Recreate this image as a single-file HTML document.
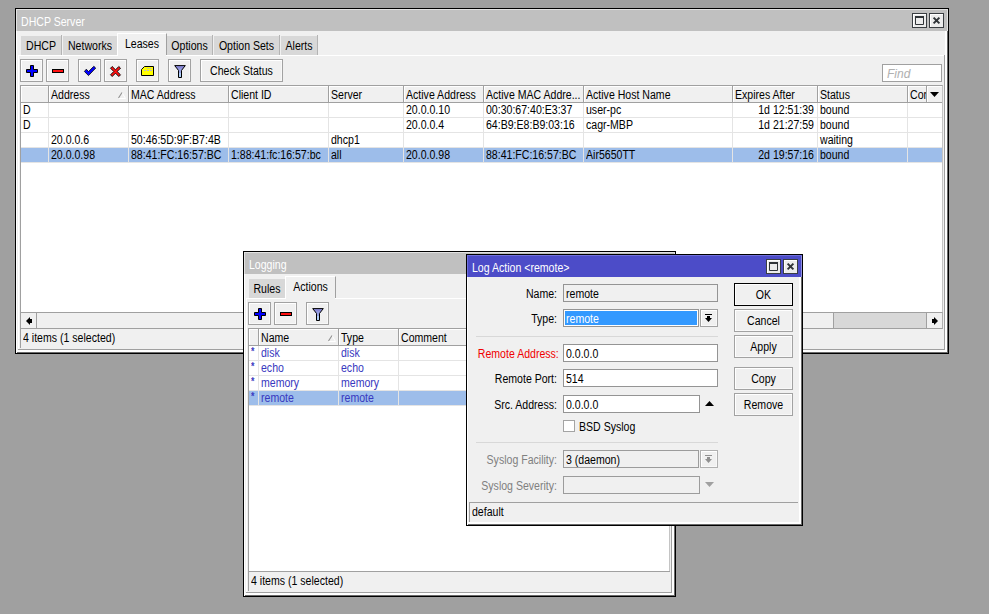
<!DOCTYPE html>
<html><head><meta charset="utf-8"><title>WinBox</title>
<style>
*{box-sizing:border-box;margin:0;padding:0}
html,body{width:989px;height:614px;overflow:hidden;background:#a0a0a0}
body{position:relative;font-family:"Liberation Sans",sans-serif;font-size:12px;color:#000;line-height:15px}
div,span{position:absolute;white-space:nowrap}
.x{transform:scaleX(0.88)}
.win{background:#f0f0f0;border:1px solid #000;box-shadow:inset 1px 1px 0 #fff,inset -1px -1px 0 #6a6a6a,inset -3px -3px 0 #fff}
.tb{height:22px;background:#c0c0c0;box-shadow:inset 1px 1px 0 #e2e2e2,inset -1px 0 0 #e2e2e2}
.tb.act{background:#4c4cc8;box-shadow:inset 1px 1px 0 #7070dc,inset -1px 0 0 #9090e0}
.wb{width:15px;height:15px;background:#ececec;border:1px solid #3a3e42;box-shadow:inset 1px 1px 0 #fff}
.tab{background:#d8d8d8;height:19px}
.tab.on{background:#f0f0f0;border-left:1px solid #fff;border-top:1px solid #fff;border-right:1px solid #a0a0a0}
.btn{background:#f0f0f0;border:1px solid #a2a2a2;box-shadow:inset 1px 1px 0 #fff,inset -1px -1px 0 #f8f8f8}
.tbl{background:#fff;overflow:hidden}
.hd{top:0;height:17px;background:#f0f0f0;border-right:1px solid #a0a0a0;border-bottom:1px solid #a0a0a0;box-shadow:inset 1px 1px 0 #fff;overflow:hidden}
.hd span{left:2px;top:1px;line-height:17px;transform:scaleX(0.88);transform-origin:0 50%}
.vl{width:1px;background:#e4e4e4}
.hl{height:1px;background:#e4e4e4}
.sel{background:#9dbdea}
.in{background:#fff;border:1px solid #949494;height:18px}
svg{position:absolute;overflow:visible}
</style></head><body>
<div class="win" style="left:15px;top:8px;width:934px;height:346px"></div>
<div class="tb" style="left:16px;top:9px;width:932px"></div>
<div class="x" style="top:15px;line-height:15px;height:15px;left:21px;transform-origin:0 50%;color:#fff;">DHCP Server</div>
<div class="wb" style="left:912px;top:13px"></div>
<svg style="left:915px;top:16px" width="9" height="9" viewBox="0 0 9 9"><path d="M0.5 1 H8.5 V8.5 H0.5z" fill="none" stroke="#303438" stroke-width="1"/><rect x="0" y="0" width="9" height="2" fill="#303438"/></svg>
<div class="wb" style="left:929px;top:13px"></div>
<svg style="left:933px;top:17px" width="7" height="7" viewBox="0 0 7 7"><path d="M0.6 0.6 L6.4 6.4 M6.4 0.6 L0.6 6.4" stroke="#303438" stroke-width="2"/></svg>
<div style="left:18px;top:55px;width:926px;height:1px;background:#fff"></div>
<div style="left:18px;top:55px;width:1px;height:294px;background:#fff"></div>
<div style="left:944px;top:55px;width:1px;height:295px;background:#a0a0a0"></div>
<div style="left:18px;top:349px;width:927px;height:1px;background:#a0a0a0"></div>
<div class="tab" style="left:21px;top:36px;width:40px"></div>
<div style="left:61px;top:35px;width:1px;height:20px;background:#b4b4b4"></div>
<div class="x" style="top:39px;line-height:15px;height:15px;left:21px;width:40px;text-align:center;transform-origin:50% 50%;">DHCP</div>
<div class="tab" style="left:63px;top:36px;width:54px"></div>
<div class="x" style="top:39px;line-height:15px;height:15px;left:63px;width:54px;text-align:center;transform-origin:50% 50%;">Networks</div>
<div class="tab on" style="left:117px;top:33px;width:50px;height:22px"></div>
<div style="left:118px;top:55px;width:48px;height:1px;background:#f0f0f0"></div>
<div class="x" style="top:37px;line-height:15px;height:15px;left:117px;width:50px;text-align:center;transform-origin:50% 50%;">Leases</div>
<div class="tab" style="left:167px;top:36px;width:45px"></div>
<div style="left:212px;top:35px;width:1px;height:20px;background:#b4b4b4"></div>
<div class="x" style="top:39px;line-height:15px;height:15px;left:167px;width:45px;text-align:center;transform-origin:50% 50%;">Options</div>
<div class="tab" style="left:214px;top:36px;width:65px"></div>
<div style="left:279px;top:35px;width:1px;height:20px;background:#b4b4b4"></div>
<div class="x" style="top:39px;line-height:15px;height:15px;left:214px;width:65px;text-align:center;transform-origin:50% 50%;">Option Sets</div>
<div class="tab" style="left:281px;top:36px;width:36px"></div>
<div style="left:317px;top:35px;width:1px;height:20px;background:#b4b4b4"></div>
<div class="x" style="top:39px;line-height:15px;height:15px;left:281px;width:36px;text-align:center;transform-origin:50% 50%;">Alerts</div>
<div class="btn" style="left:20px;top:59px;width:23px;height:23px"></div>
<svg style="left:26px;top:65px" width="12" height="12" viewBox="0 0 12 12"><path d="M4.5 0.5h3v4h4v3h-4v4h-3v-4h-4v-3h4z" fill="#0000ff" stroke="#000" stroke-width="1" stroke-linejoin="miter"/></svg>
<div class="btn" style="left:46px;top:59px;width:23px;height:23px"></div>
<svg style="left:52px;top:69px" width="12" height="4" viewBox="0 0 12 4"><rect x="0.5" y="0.5" width="11" height="3" fill="#ff1010" stroke="#000" stroke-width="1"/></svg>
<div class="btn" style="left:78px;top:59px;width:23px;height:23px"></div>
<svg style="left:84px;top:66px" width="12" height="10" viewBox="0 0 12 10"><path d="M0.4 5.5 L2.3 3.2 L4.5 5.6 L9.8 0.3 L11.7 2.1 L4.5 9.6z" fill="#0000ff" stroke="#000" stroke-width="0.8"/></svg>
<div class="btn" style="left:104px;top:59px;width:23px;height:23px"></div>
<svg style="left:110px;top:66px" width="11" height="11" viewBox="0 0 11 11"><path d="M0.5 2.2 L2.2 0.5 L5.5 3.8 L8.8 0.5 L10.5 2.2 L7.2 5.5 L10.5 8.8 L8.8 10.5 L5.5 7.2 L2.2 10.5 L0.5 8.8 L3.8 5.5z" fill="#ff1010" stroke="#000" stroke-width="0.9"/></svg>
<div class="btn" style="left:136px;top:59px;width:23px;height:23px"></div>
<svg style="left:141px;top:66px" width="13" height="10" viewBox="0 0 13 10"><path d="M3.5 0.5 H12.5 V9.5 H0.5 V3.5z" fill="#ffff00" stroke="#000" stroke-width="1"/><path d="M6 2.5h1.5M8.5 2.5h2M3 4.5h2M6 4.5h2M9 4.5h2" stroke="#b8b8c8" stroke-width="1"/></svg>
<div class="btn" style="left:168px;top:59px;width:23px;height:23px"></div>
<svg style="left:174px;top:65px" width="12" height="13" viewBox="0 0 12 13"><path d="M0.7 0.6 H11.3 L7.5 5.4 V12.5 H4.5 V5.4z" fill="#8888d8"/><path d="M3 3.5H9L7.5 5.4V8H4.5V5.4z" fill="#9aa4e6"/><path d="M4.5 8H7.5V12.5H4.5z" fill="#b0d0f8"/><path d="M0.7 0.6 H11.3 L7.5 5.4 V12.5 H4.5 V5.4z" fill="none" stroke="#000" stroke-width="1" stroke-linejoin="round"/></svg>
<div class="btn" style="left:200px;top:59px;width:83px;height:23px"></div>
<div class="x" style="top:64px;line-height:15px;height:15px;left:200px;width:83px;text-align:center;transform-origin:50% 50%;">Check Status</div>
<div class="in" style="left:882px;top:64px;width:60px;border-color:#a0a0a0"></div>
<div class="x" style="top:67px;line-height:15px;height:15px;left:887px;transform-origin:0 50%;color:#b0b0b0;font-style:italic;transform:scaleX(1);">Find</div>
<div class="tbl" style="left:20px;top:85px;width:923px;height:227px;border-left:1px solid #a0a0a0;border-top:1px solid #a0a0a0;border-right:1px solid #c4c4c4">
<div class="hd" style="left:0px;width:28px"><span></span></div>
<div class="hd" style="left:28px;width:80px"><span>Address</span></div>
<div class="hd" style="left:108px;width:100px"><span>MAC Address</span></div>
<div class="hd" style="left:208px;width:100px"><span>Client ID</span></div>
<div class="hd" style="left:308px;width:75px"><span>Server</span></div>
<div class="hd" style="left:383px;width:80px"><span>Active Address</span></div>
<div class="hd" style="left:463px;width:100px"><span>Active MAC Addre...</span></div>
<div class="hd" style="left:563px;width:149px"><span>Active Host Name</span></div>
<div class="hd" style="left:712px;width:85px"><span>Expires After</span></div>
<div class="hd" style="left:797px;width:90px"><span>Status</span></div>
<div class="hd" style="left:887px;width:19px"><span>Cor</span></div>
<div class="hd" style="left:906px;width:16px;border-right:0"></div>
<svg style="left:909px;top:6px" width="9" height="5" viewBox="0 0 9 5"><path d="M0 0H9L4.5 5z" fill="#000"/></svg>
<svg style="left:97px;top:6px" width="8" height="7" viewBox="0 0 8 7"><path d="M4 0.5L7.5 6.5H0.5" fill="none" stroke="#fff"/><path d="M0.5 6L4 0.5" fill="none" stroke="#909090" stroke-width="1.1"/></svg>
<div class="sel" style="left:0;top:62px;width:923px;height:15px"></div>
<div class="hl" style="left:0;top:31px;width:923px"></div>
<div class="hl" style="left:0;top:46px;width:923px"></div>
<div class="hl" style="left:0;top:61px;width:923px"></div>
<div class="hl" style="left:0;top:76px;width:923px"></div>
<div class="vl" style="left:27px;top:17px;height:60px"></div>
<div class="vl" style="left:107px;top:17px;height:60px"></div>
<div class="vl" style="left:207px;top:17px;height:60px"></div>
<div class="vl" style="left:307px;top:17px;height:60px"></div>
<div class="vl" style="left:382px;top:17px;height:60px"></div>
<div class="vl" style="left:462px;top:17px;height:60px"></div>
<div class="vl" style="left:562px;top:17px;height:60px"></div>
<div class="vl" style="left:711px;top:17px;height:60px"></div>
<div class="vl" style="left:796px;top:17px;height:60px"></div>
<div class="vl" style="left:886px;top:17px;height:60px"></div>
<div class="x" style="top:17px;line-height:15px;height:15px;left:2px;transform-origin:0 50%;">D</div>
<div class="x" style="top:17px;line-height:15px;height:15px;left:385px;transform-origin:0 50%;">20.0.0.10</div>
<div class="x" style="top:17px;line-height:15px;height:15px;left:465px;transform-origin:0 50%;">00:30:67:40:E3:37</div>
<div class="x" style="top:17px;line-height:15px;height:15px;left:565px;transform-origin:0 50%;">user-pc</div>
<div class="x" style="top:17px;line-height:15px;height:15px;left:712px;width:81px;text-align:right;transform-origin:100% 50%;">1d 12:51:39</div>
<div class="x" style="top:17px;line-height:15px;height:15px;left:799px;transform-origin:0 50%;">bound</div>
<div class="x" style="top:32px;line-height:15px;height:15px;left:2px;transform-origin:0 50%;">D</div>
<div class="x" style="top:32px;line-height:15px;height:15px;left:385px;transform-origin:0 50%;">20.0.0.4</div>
<div class="x" style="top:32px;line-height:15px;height:15px;left:465px;transform-origin:0 50%;">64:B9:E8:B9:03:16</div>
<div class="x" style="top:32px;line-height:15px;height:15px;left:565px;transform-origin:0 50%;">cagr-MBP</div>
<div class="x" style="top:32px;line-height:15px;height:15px;left:712px;width:81px;text-align:right;transform-origin:100% 50%;">1d 21:27:59</div>
<div class="x" style="top:32px;line-height:15px;height:15px;left:799px;transform-origin:0 50%;">bound</div>
<div class="x" style="top:47px;line-height:15px;height:15px;left:30px;transform-origin:0 50%;">20.0.0.6</div>
<div class="x" style="top:47px;line-height:15px;height:15px;left:110px;transform-origin:0 50%;">50:46:5D:9F:B7:4B</div>
<div class="x" style="top:47px;line-height:15px;height:15px;left:310px;transform-origin:0 50%;">dhcp1</div>
<div class="x" style="top:47px;line-height:15px;height:15px;left:799px;transform-origin:0 50%;">waiting</div>
<div class="x" style="top:62px;line-height:15px;height:15px;left:30px;transform-origin:0 50%;">20.0.0.98</div>
<div class="x" style="top:62px;line-height:15px;height:15px;left:110px;transform-origin:0 50%;">88:41:FC:16:57:BC</div>
<div class="x" style="top:62px;line-height:15px;height:15px;left:210px;transform-origin:0 50%;">1:88:41:fc:16:57:bc</div>
<div class="x" style="top:62px;line-height:15px;height:15px;left:310px;transform-origin:0 50%;">all</div>
<div class="x" style="top:62px;line-height:15px;height:15px;left:385px;transform-origin:0 50%;">20.0.0.98</div>
<div class="x" style="top:62px;line-height:15px;height:15px;left:465px;transform-origin:0 50%;">88:41:FC:16:57:BC</div>
<div class="x" style="top:62px;line-height:15px;height:15px;left:565px;transform-origin:0 50%;">Air5650TT</div>
<div class="x" style="top:62px;line-height:15px;height:15px;left:712px;width:81px;text-align:right;transform-origin:100% 50%;">2d 19:57:16</div>
<div class="x" style="top:62px;line-height:15px;height:15px;left:799px;transform-origin:0 50%;">bound</div>
</div>
<div style="left:20px;top:312px;width:923px;height:17px;background:#f0f0f0;border-top:1px solid #a0a0a0;border-bottom:1px solid #a0a0a0;border-left:1px solid #a0a0a0;border-right:1px solid #b0b0b0"></div>
<div style="left:36px;top:313px;width:1px;height:15px;background:#a0a0a0"></div>
<svg style="left:26px;top:317px" width="6" height="8" viewBox="0 0 6 8"><path d="M0 4L4 0V2H6V6H4V8z" fill="#000"/></svg>
<div style="left:833px;top:313px;width:94px;height:15px;background:#d8d8d8;border-left:1px solid #a0a0a0;border-right:1px solid #a0a0a0"></div>
<svg style="left:932px;top:317px" width="6" height="8" viewBox="0 0 6 8"><path d="M6 4L2 0V2H0V6H2V8z" fill="#000"/></svg>
<div style="left:20px;top:329px;width:1px;height:19px;background:#a0a0a0"></div>
<div class="x" style="top:330px;line-height:16px;height:16px;left:23px;transform-origin:0 50%;">4 items (1 selected)</div>
<div class="win" style="left:243px;top:251px;width:433px;height:346px"></div>
<div class="tb" style="left:244px;top:252px;width:431px"></div>
<div class="x" style="top:258px;line-height:15px;height:15px;left:249px;transform-origin:0 50%;color:#fff;">Logging</div>
<div style="left:246px;top:298px;width:425px;height:1px;background:#fff"></div>
<div style="left:246px;top:298px;width:1px;height:294px;background:#fff"></div>
<div style="left:671px;top:298px;width:1px;height:295px;background:#a0a0a0"></div>
<div style="left:246px;top:592px;width:426px;height:1px;background:#a0a0a0"></div>
<div class="tab" style="left:249px;top:279px;width:36px"></div>
<div class="x" style="top:282px;line-height:15px;height:15px;left:249px;width:36px;text-align:center;transform-origin:50% 50%;">Rules</div>
<div class="tab on" style="left:285px;top:276px;width:51px;height:22px"></div>
<div style="left:286px;top:298px;width:49px;height:1px;background:#f0f0f0"></div>
<div class="x" style="top:280px;line-height:15px;height:15px;left:285px;width:51px;text-align:center;transform-origin:50% 50%;">Actions</div>
<div class="btn" style="left:248px;top:302px;width:23px;height:23px"></div>
<svg style="left:254px;top:308px" width="12" height="12" viewBox="0 0 12 12"><path d="M4.5 0.5h3v4h4v3h-4v4h-3v-4h-4v-3h4z" fill="#0000ff" stroke="#000" stroke-width="1" stroke-linejoin="miter"/></svg>
<div class="btn" style="left:274px;top:302px;width:23px;height:23px"></div>
<svg style="left:280px;top:312px" width="12" height="4" viewBox="0 0 12 4"><rect x="0.5" y="0.5" width="11" height="3" fill="#ff1010" stroke="#000" stroke-width="1"/></svg>
<div class="btn" style="left:306px;top:302px;width:23px;height:23px"></div>
<svg style="left:312px;top:308px" width="12" height="13" viewBox="0 0 12 13"><path d="M0.7 0.6 H11.3 L7.5 5.4 V12.5 H4.5 V5.4z" fill="#8888d8"/><path d="M3 3.5H9L7.5 5.4V8H4.5V5.4z" fill="#9aa4e6"/><path d="M4.5 8H7.5V12.5H4.5z" fill="#b0d0f8"/><path d="M0.7 0.6 H11.3 L7.5 5.4 V12.5 H4.5 V5.4z" fill="none" stroke="#000" stroke-width="1" stroke-linejoin="round"/></svg>
<div class="tbl" style="left:248px;top:328px;width:422px;height:243px;border-left:1px solid #a0a0a0;border-top:1px solid #a0a0a0;border-right:1px solid #c4c4c4">
<div class="hd" style="left:0px;width:10px"><span></span></div>
<div class="hd" style="left:10px;width:80px"><span>Name</span></div>
<div class="hd" style="left:90px;width:60px"><span>Type</span></div>
<div class="hd" style="left:150px;width:272px"><span>Comment</span></div>
<svg style="left:79px;top:6px" width="8" height="7" viewBox="0 0 8 7"><path d="M4 0.5L7.5 6.5H0.5" fill="none" stroke="#fff"/><path d="M0.5 6L4 0.5" fill="none" stroke="#909090" stroke-width="1.1"/></svg>
<div class="sel" style="left:0;top:62px;width:422px;height:15px"></div>
<div class="hl" style="left:0;top:31px;width:422px"></div>
<div class="hl" style="left:0;top:46px;width:422px"></div>
<div class="hl" style="left:0;top:61px;width:422px"></div>
<div class="hl" style="left:0;top:76px;width:422px"></div>
<div class="vl" style="left:9px;top:17px;height:60px"></div>
<div class="vl" style="left:89px;top:17px;height:60px"></div>
<div class="vl" style="left:149px;top:17px;height:60px"></div>
<div class="vl" style="left:421px;top:17px;height:60px"></div>
<div class="x" style="top:15px;line-height:15px;height:15px;left:2px;transform-origin:0 50%;color:#3838c0;font-size:10px;font-weight:bold;">*</div>
<div class="x" style="top:17px;line-height:15px;height:15px;left:12px;transform-origin:0 50%;color:#3838c0;">disk</div>
<div class="x" style="top:17px;line-height:15px;height:15px;left:92px;transform-origin:0 50%;color:#3838c0;">disk</div>
<div class="x" style="top:30px;line-height:15px;height:15px;left:2px;transform-origin:0 50%;color:#3838c0;font-size:10px;font-weight:bold;">*</div>
<div class="x" style="top:32px;line-height:15px;height:15px;left:12px;transform-origin:0 50%;color:#3838c0;">echo</div>
<div class="x" style="top:32px;line-height:15px;height:15px;left:92px;transform-origin:0 50%;color:#3838c0;">echo</div>
<div class="x" style="top:45px;line-height:15px;height:15px;left:2px;transform-origin:0 50%;color:#3838c0;font-size:10px;font-weight:bold;">*</div>
<div class="x" style="top:47px;line-height:15px;height:15px;left:12px;transform-origin:0 50%;color:#3838c0;">memory</div>
<div class="x" style="top:47px;line-height:15px;height:15px;left:92px;transform-origin:0 50%;color:#3838c0;">memory</div>
<div class="x" style="top:60px;line-height:15px;height:15px;left:2px;transform-origin:0 50%;color:#3838c0;font-size:10px;font-weight:bold;">*</div>
<div class="x" style="top:62px;line-height:15px;height:15px;left:12px;transform-origin:0 50%;color:#3838c0;">remote</div>
<div class="x" style="top:62px;line-height:15px;height:15px;left:92px;transform-origin:0 50%;color:#3838c0;">remote</div>
</div>
<div style="left:248px;top:571px;width:422px;height:1px;background:#a0a0a0"></div>
<div style="left:248px;top:572px;width:1px;height:19px;background:#a0a0a0"></div>
<div class="x" style="top:573px;line-height:16px;height:16px;left:251px;transform-origin:0 50%;">4 items (1 selected)</div>
<div class="win" style="left:466px;top:254px;width:337px;height:272px"></div>
<div class="tb act" style="left:467px;top:255px;width:335px"></div>
<div class="x" style="top:261px;line-height:15px;height:15px;left:472px;transform-origin:0 50%;color:#fff;">Log Action &lt;remote&gt;</div>
<div class="wb" style="left:766px;top:259px"></div>
<svg style="left:769px;top:262px" width="9" height="9" viewBox="0 0 9 9"><path d="M0.5 1 H8.5 V8.5 H0.5z" fill="none" stroke="#303438" stroke-width="1"/><rect x="0" y="0" width="9" height="2" fill="#303438"/></svg>
<div class="wb" style="left:783px;top:259px"></div>
<svg style="left:787px;top:263px" width="7" height="7" viewBox="0 0 7 7"><path d="M0.6 0.6 L6.4 6.4 M6.4 0.6 L0.6 6.4" stroke="#303438" stroke-width="2"/></svg>
<div class="x" style="top:287px;line-height:15px;height:15px;left:467.3px;width:90px;text-align:right;transform-origin:100% 50%;color:#000;">Name:</div>
<div class="in" style="left:563px;top:284px;width:155px;background:#f0f0f0;border-color:#949494"></div>
<div class="x" style="top:287px;line-height:15px;height:15px;left:566px;transform-origin:0 50%;">remote</div>
<div class="x" style="top:312px;line-height:15px;height:15px;left:467.3px;width:90px;text-align:right;transform-origin:100% 50%;color:#000;">Type:</div>
<div class="in" style="left:563px;top:309px;width:136px;background:#fff;border-color:#949494"></div>
<div style="left:565px;top:311px;width:132px;height:14px;background:#3399ff"></div>
<div class="x" style="top:312px;line-height:15px;height:15px;left:566px;transform-origin:0 50%;color:#fff;">remote</div>
<div class="btn" style="left:700px;top:309px;width:18px;height:18px"></div>
<svg style="left:705px;top:314px" width="7" height="8" viewBox="0 0 7 8"><path d="M0 0H7V1H0z M2 2H5V4H7L3.5 8L0 4H2z" fill="#000"/></svg>
<div style="left:476px;top:336px;width:242px;height:1px;background:#d8d8d8"></div>
<div class="x" style="top:347px;line-height:15px;height:15px;left:467.3px;width:90px;text-align:right;transform-origin:100% 50%;color:#f00000;">Remote Address:</div>
<div class="in" style="left:563px;top:344px;width:155px;background:#fff;border-color:#949494"></div>
<div class="x" style="top:347px;line-height:15px;height:15px;left:566px;transform-origin:0 50%;">0.0.0.0</div>
<div class="x" style="top:372px;line-height:15px;height:15px;left:467.3px;width:90px;text-align:right;transform-origin:100% 50%;color:#000;">Remote Port:</div>
<div class="in" style="left:563px;top:369px;width:155px;background:#fff;border-color:#949494"></div>
<div class="x" style="top:372px;line-height:15px;height:15px;left:566px;transform-origin:0 50%;">514</div>
<div class="x" style="top:398px;line-height:15px;height:15px;left:467.3px;width:90px;text-align:right;transform-origin:100% 50%;color:#000;">Src. Address:</div>
<div class="in" style="left:563px;top:395px;width:137px;background:#fff;border-color:#949494"></div>
<div class="x" style="top:398px;line-height:15px;height:15px;left:566px;transform-origin:0 50%;">0.0.0.0</div>
<svg style="left:705px;top:401px" width="9" height="5" viewBox="0 0 9 5"><path d="M0 5H9L4.5 0z" fill="#000"/></svg>
<div style="left:563px;top:420px;width:12px;height:12px;background:#fff;border:1px solid #a4a4a4"></div>
<div class="x" style="top:420px;line-height:15px;height:15px;left:579px;transform-origin:0 50%;">BSD Syslog</div>
<div style="left:476px;top:442px;width:242px;height:1px;background:#d8d8d8"></div>
<div class="x" style="top:453px;line-height:15px;height:15px;left:467.3px;width:90px;text-align:right;transform-origin:100% 50%;color:#808080;">Syslog Facility:</div>
<div class="in" style="left:563px;top:450px;width:136px;background:#f0f0f0;border-color:#9c9c9c"></div>
<div class="x" style="top:453px;line-height:15px;height:15px;left:566px;transform-origin:0 50%;">3 (daemon)</div>
<div class="btn" style="left:700px;top:450px;width:18px;height:18px;border-color:#b0b0b0"></div>
<svg style="left:705px;top:455px" width="7" height="8" viewBox="0 0 7 8"><path d="M0 0H7V1H0z M2 2H5V4H7L3.5 8L0 4H2z" fill="#909090"/></svg>
<div class="x" style="top:479px;line-height:15px;height:15px;left:467.3px;width:90px;text-align:right;transform-origin:100% 50%;color:#808080;">Syslog Severity:</div>
<div class="in" style="left:563px;top:476px;width:137px;background:#f0f0f0;border-color:#9c9c9c"></div>
<svg style="left:705px;top:482px" width="9" height="5" viewBox="0 0 9 5"><path d="M0 0H9L4.5 5z" fill="#a0a0a0"/></svg>
<div class="btn" style="left:734px;top:283px;width:59px;height:23px;border-color:#000"></div>
<div class="x" style="top:288px;line-height:15px;height:15px;left:734px;width:59px;text-align:center;transform-origin:50% 50%;">OK</div>
<div class="btn" style="left:734px;top:309px;width:59px;height:23px"></div>
<div class="x" style="top:314px;line-height:15px;height:15px;left:734px;width:59px;text-align:center;transform-origin:50% 50%;">Cancel</div>
<div class="btn" style="left:734px;top:335px;width:59px;height:23px"></div>
<div class="x" style="top:340px;line-height:15px;height:15px;left:734px;width:59px;text-align:center;transform-origin:50% 50%;">Apply</div>
<div class="btn" style="left:734px;top:367px;width:59px;height:23px"></div>
<div class="x" style="top:372px;line-height:15px;height:15px;left:734px;width:59px;text-align:center;transform-origin:50% 50%;">Copy</div>
<div class="btn" style="left:734px;top:393px;width:59px;height:23px"></div>
<div class="x" style="top:398px;line-height:15px;height:15px;left:734px;width:59px;text-align:center;transform-origin:50% 50%;">Remove</div>
<div style="left:469px;top:502px;width:329px;height:1px;background:#a0a0a0"></div>
<div style="left:469px;top:503px;width:1px;height:19px;background:#a0a0a0"></div>
<div class="x" style="top:504px;line-height:16px;height:16px;left:472px;transform-origin:0 50%;">default</div>
</body></html>
